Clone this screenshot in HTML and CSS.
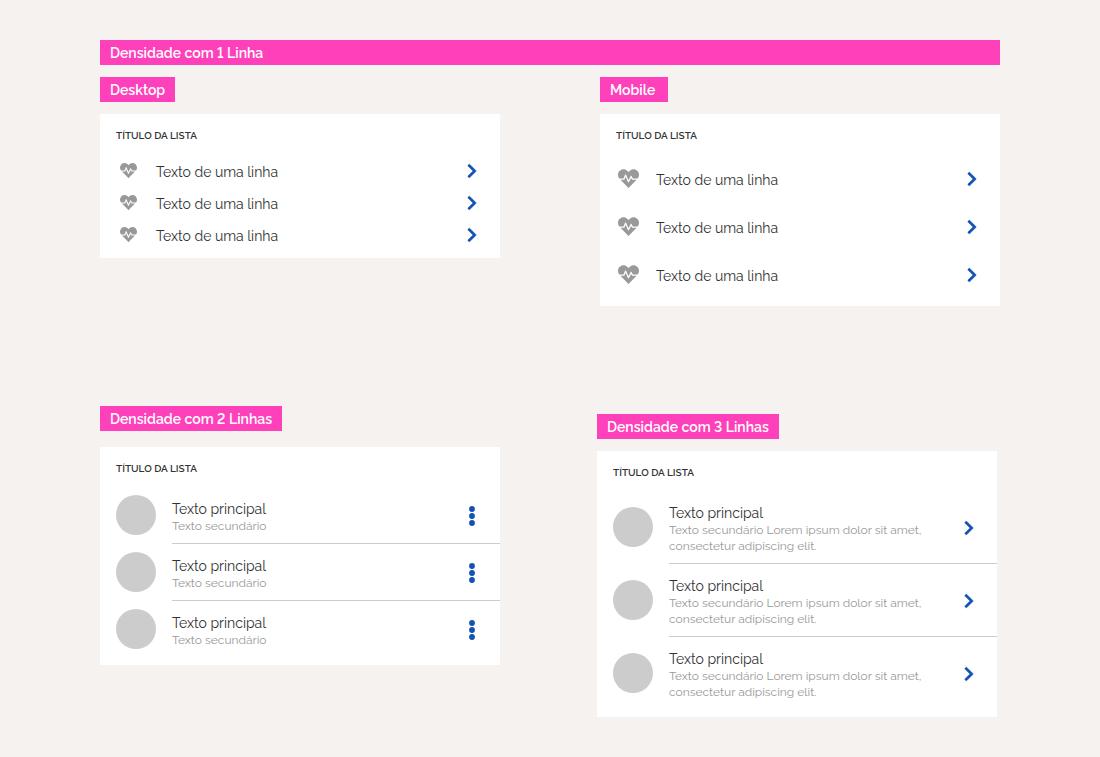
FILE: index.html
```html
<!DOCTYPE html>
<html lang="pt-BR">
<head>
<meta charset="utf-8">
<meta name="viewport" content="width=device-width, initial-scale=1">
<title>Densidade de listas</title>
<link rel="stylesheet" href="styles.css">
</head>
<body>
<svg class="sprite" aria-hidden="true">
  <symbol id="heart" viewBox="0 0 512 512"><path d="M320.2 243.8l-49.7 99.4c-6 12.1-23.4 11.7-28.9-.6l-56.9-126.3-30 71.7H60.6l182.5 186.5c7.1 7.3 18.6 7.3 25.7 0L451.4 288H342.3l-22.1-44.2zM473.7 73.9l-2.4-2.5c-51.5-52.6-135.8-52.6-187.4 0L256 100l-27.9-28.5c-51.5-52.7-135.9-52.7-187.4 0l-2.4 2.4C-10.4 123.7-12.5 203 31 256h102.4l35.9-86.2c5.4-12.9 23.6-13.2 29.4-.4l58.2 129.3 49-97.9c5.9-11.8 22.7-11.8 28.6 0l27.6 55.2H481c43.5-53 41.4-132.3-7.3-182.1z"/></symbol>
  <symbol id="chevron" viewBox="0 0 320 512"><path d="M285.476 272.971L91.132 467.314c-9.373 9.373-24.569 9.373-33.941 0l-22.667-22.667c-9.357-9.357-9.375-24.522-.04-33.901L188.505 256 34.484 101.255c-9.335-9.379-9.317-24.544.04-33.901l22.667-22.667c9.373-9.373 24.569-9.373 33.941 0L285.475 239.03c9.373 9.372 9.373 24.568.001 33.941z"/></symbol>
  <symbol id="dots" viewBox="0 0 6 20"><circle cx="3" cy="3" r="2.9"/><circle cx="3" cy="10" r="2.9"/><circle cx="3" cy="17" r="2.9"/></symbol>
</svg>
<main class="page">
  <h1 class="tag tag-wide">Densidade com 1 Linha</h1>
  <div class="columns">
    <section class="group">
      <h2 class="tag">Desktop</h2>
      <div class="card">
        <h3 class="card-title">TÍTULO DA LISTA</h3>
        <ul class="list compact">
          <li class="item"><span class="icon"><svg class="heart"><use href="#heart"/></svg></span><span class="main">Texto de uma linha</span><button class="action" type="button" aria-label="Abrir"><svg class="chevron"><use href="#chevron"/></svg></button></li>
          <li class="item"><span class="icon"><svg class="heart"><use href="#heart"/></svg></span><span class="main">Texto de uma linha</span><button class="action" type="button" aria-label="Abrir"><svg class="chevron"><use href="#chevron"/></svg></button></li>
          <li class="item"><span class="icon"><svg class="heart"><use href="#heart"/></svg></span><span class="main">Texto de uma linha</span><button class="action" type="button" aria-label="Abrir"><svg class="chevron"><use href="#chevron"/></svg></button></li>
        </ul>
      </div>
    </section>
    <section class="group">
      <h2 class="tag">Mobile</h2>
      <div class="card">
        <h3 class="card-title">TÍTULO DA LISTA</h3>
        <ul class="list roomy">
          <li class="item"><span class="icon"><svg class="heart"><use href="#heart"/></svg></span><span class="main">Texto de uma linha</span><button class="action" type="button" aria-label="Abrir"><svg class="chevron"><use href="#chevron"/></svg></button></li>
          <li class="item"><span class="icon"><svg class="heart"><use href="#heart"/></svg></span><span class="main">Texto de uma linha</span><button class="action" type="button" aria-label="Abrir"><svg class="chevron"><use href="#chevron"/></svg></button></li>
          <li class="item"><span class="icon"><svg class="heart"><use href="#heart"/></svg></span><span class="main">Texto de uma linha</span><button class="action" type="button" aria-label="Abrir"><svg class="chevron"><use href="#chevron"/></svg></button></li>
        </ul>
      </div>
    </section>
  </div>
  <div class="columns columns-lower">
    <section class="group group-two">
      <h2 class="tag">Densidade com 2 Linhas</h2>
      <div class="card">
        <h3 class="card-title">TÍTULO DA LISTA</h3>
        <ul class="list two-line">
          <li class="item"><span class="avatar"></span><div class="body"><div class="texts"><p class="main">Texto principal</p><p class="sub">Texto secundário</p></div><button class="action" type="button" aria-label="Mais opções"><svg class="dots"><use href="#dots"/></svg></button></div></li>
          <li class="item"><span class="avatar"></span><div class="body"><div class="texts"><p class="main">Texto principal</p><p class="sub">Texto secundário</p></div><button class="action" type="button" aria-label="Mais opções"><svg class="dots"><use href="#dots"/></svg></button></div></li>
          <li class="item"><span class="avatar"></span><div class="body"><div class="texts"><p class="main">Texto principal</p><p class="sub">Texto secundário</p></div><button class="action" type="button" aria-label="Mais opções"><svg class="dots"><use href="#dots"/></svg></button></div></li>
        </ul>
      </div>
    </section>
    <section class="group group-three">
      <h2 class="tag">Densidade com 3 Linhas</h2>
      <div class="card">
        <h3 class="card-title">TÍTULO DA LISTA</h3>
        <ul class="list three-line">
          <li class="item"><span class="avatar"></span><div class="body"><div class="texts"><p class="main">Texto principal</p><p class="sub">Texto secundário Lorem ipsum dolor sit amet, consectetur adipiscing elit.</p></div><button class="action" type="button" aria-label="Abrir"><svg class="chevron"><use href="#chevron"/></svg></button></div></li>
          <li class="item"><span class="avatar"></span><div class="body"><div class="texts"><p class="main">Texto principal</p><p class="sub">Texto secundário Lorem ipsum dolor sit amet, consectetur adipiscing elit.</p></div><button class="action" type="button" aria-label="Abrir"><svg class="chevron"><use href="#chevron"/></svg></button></div></li>
          <li class="item"><span class="avatar"></span><div class="body"><div class="texts"><p class="main">Texto principal</p><p class="sub">Texto secundário Lorem ipsum dolor sit amet, consectetur adipiscing elit.</p></div><button class="action" type="button" aria-label="Abrir"><svg class="chevron"><use href="#chevron"/></svg></button></div></li>
        </ul>
      </div>
    </section>
  </div>
</main>
</body>
</html>
```
FILE: styles.css
```css
* { box-sizing: border-box; }
body {
  margin: 0;
  background: #f6f2ef;
  color: #333;
  font-family: Raleway, Lato, sans-serif;
  font-size: 14px;
  font-variant-numeric: lining-nums;
}
h1, h2, h3, p, ul { margin: 0; padding: 0; }
.sprite { display: none; }
.page { padding: 40px 100px; }

.tag {
  min-width: 68px;
  padding: 1px 10px 0;
  background: #ff40bb;
  color: #fff;
  font-size: 14px;
  font-weight: 600;
  line-height: 24px;
}
.tag-wide { margin-bottom: 12px; }

.columns {
  display: grid;
  grid-template-columns: 1fr 1fr;
  align-items: start;
  gap: 100px;
}
.columns-lower {
  margin-top: 100px;
  padding-right: 3px;
  gap: 97px;
}
.group {
  display: flex;
  flex-direction: column;
  align-items: flex-start;
  gap: 12px;
}
.group-two { gap: 16px; }
.group-three { padding-top: 8px; }

.card {
  width: 100%;
  padding: 8px 0;
  background: #fff;
}
.card-title {
  padding: 6px 16px 10px;
  font-size: 10px;
  font-weight: 600;
  line-height: 16px;
}
.list { list-style: none; }
.item {
  display: flex;
  align-items: center;
  gap: 16px;
  padding-left: 16px;
}
.compact .item, .roomy .item { padding-right: 16px; }
.compact .item { min-height: 32px; }
.roomy .item { min-height: 48px; }
.icon {
  display: flex;
  justify-content: center;
  width: 24px;
}
.heart { width: 17px; height: 17px; fill: #999; }
.roomy .heart { width: 21px; height: 21px; }
.main { flex: 1; font-weight: 400; line-height: 18px; }
.compact .main, .roomy .main { padding-top: 3px; }
.action {
  display: flex;
  justify-content: center;
  align-items: center;
  width: 24px;
  height: 24px;
  padding: 1px 0 0;
  border: 0;
  background: none;
  color: #1351b4;
  cursor: pointer;
}
.chevron {
  width: 10px;
  height: 16px;
  fill: currentColor;
  stroke: currentColor;
  stroke-width: 12;
}
.dots { width: 6px; height: 20px; fill: currentColor; }

.avatar {
  flex: none;
  width: 40px;
  height: 40px;
  border-radius: 50%;
  background: #ccc;
}
.item:not(:last-child) .avatar { margin-bottom: 1px; }
.body {
  flex: 1;
  display: flex;
  align-items: center;
  gap: 16px;
  padding-right: 16px;
  border-bottom: 1px solid #ccc;
}
.two-line .body { min-height: 57px; }
.three-line .body { min-height: 73px; }
.item:last-child .body { border-bottom: 0; }
.two-line .item:last-child .body { min-height: 56px; }
.three-line .item:last-child .body { min-height: 72px; }
.texts { flex: 1; padding: 5px 0 1px; }
.sub { color: #999; font-size: 12px; font-weight: 400; line-height: 16px; }
```
